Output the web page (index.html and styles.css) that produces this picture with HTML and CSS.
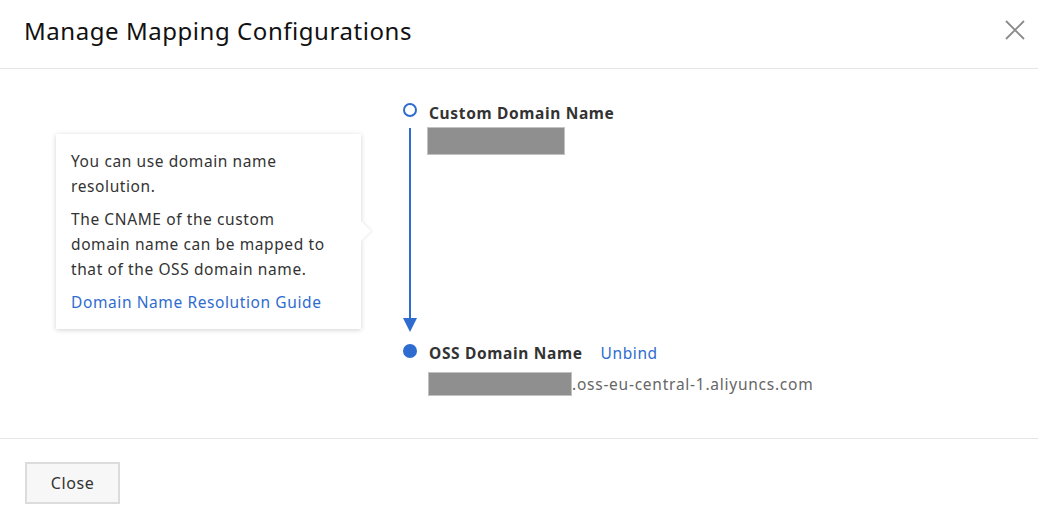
FILE: index.html
```html
<!DOCTYPE html>
<html>
<head>
<meta charset="utf-8">
<link rel="stylesheet" href="styles.css">
</head>
<body>
<div class="dialog">
  <div class="header">
    <h1 class="title">Manage Mapping Configurations</h1>
    <button class="close-x" aria-label="Close">
      <svg width="20" height="20" viewBox="0 0 20 20"><path d="M1 1L19 19M19 1L1 19" stroke="#8a8a8a" stroke-width="1.8" fill="none"/></svg>
    </button>
  </div>
  <div class="body">
    <div class="tip-col">
      <div class="tip">
        <p>You can use domain name resolution.</p>
        <p>The CNAME of the custom domain name can be mapped to that of the OSS domain name.</p>
        <a class="link" href="#">Domain Name Resolution Guide</a>
        <span class="tip-arrow"></span>
      </div>
    </div>
    <div class="flow">
      <div class="rail">
        <span class="dot hollow"></span>
        <span class="line"></span>
        <span class="arrow"></span>
        <span class="dot filled"></span>
      </div>
      <div class="nodes">
        <div class="node top">
          <div class="label">Custom Domain Name</div>
          <div class="mask mask1"></div>
        </div>
        <div class="node bottom">
          <div class="label">OSS Domain Name<a class="link unbind" href="#">Unbind</a></div>
          <div class="value"><span class="mask mask2"></span>.oss-eu-central-1.aliyuncs.com</div>
        </div>
      </div>
    </div>
  </div>
  <div class="footer">
    <button class="btn">Close</button>
  </div>
</div>
</body>
</html>
```
FILE: styles.css
```css
* { box-sizing: border-box; }
html, body { margin: 0; padding: 0; background: #fff; }
body { font-family: "Noto Sans", "Liberation Sans", Arial, sans-serif; color: #333; width: 1038px; height: 514px; overflow: hidden; letter-spacing: 0.6px; }
.dialog { width: 1038px; height: 514px; display: flex; flex-direction: column; }
.header { height: 69px; border-bottom: 1px solid #e6e6e6; display: flex; align-items: flex-start; justify-content: space-between; padding: 0 13px 0 24px; }
.title { margin: 0; padding-top: 16px; font-size: 24px; font-weight: 400; color: #111; line-height: 30px; letter-spacing: 0.55px; }
.close-x { border: 0; background: none; padding: 0; margin-top: 20px; width: 20px; height: 20px; cursor: pointer; }
.close-x svg { display: block; }
.body { height: 370px; border-bottom: 1px solid #e6e6e6; display: flex; }
.tip-col { width: 401px; padding: 65px 0 0 56px; }
.tip { position: relative; width: 305px; height: 195px; background: #fff; box-shadow: 0 1px 5px rgba(0,0,0,0.18); padding: 15px 15px 0 15px; font-size: 15.5px; line-height: 25px; color: #333; }
.tip p { margin: 0 0 8px 0; max-width: 264px; }
.tip-arrow { position: absolute; right: -7px; top: 90px; width: 14px; height: 14px; background: #fff; transform: rotate(45deg); box-shadow: 2px -2px 3px -1px rgba(0,0,0,0.08); }
.link { color: #2f6ccf; text-decoration: none; }
.flow { display: flex; padding-top: 34px; }
.rail { width: 18px; position: relative; display: flex; flex-direction: column; align-items: center; }
.dot { width: 14px; height: 14px; border-radius: 50%; flex: none; }
.dot.hollow { border: 2px solid #2f6ccf; background: #fff; }
.dot.filled { background: #2f6ccf; margin-top: 12px; }
.line { width: 2px; height: 190px; background: #2f6ccf; margin-top: 11px; }
.arrow { width: 0; height: 0; border-left: 7px solid transparent; border-right: 7px solid transparent; border-top: 14px solid #2f6ccf; }
.nodes { padding-left: 10px; display: flex; flex-direction: column; margin-top: -2px; }
.node .label { font-weight: 700; font-size: 15.5px; line-height: 24px; color: #333; letter-spacing: 0.65px; }
.mask { background: #8f8f8f; border: 1px solid #c2c2c2; display: block; }
.mask1 { width: 138px; height: 28px; margin-top: 2px; margin-left: -2px; }
.node.bottom { margin-top: 186px; }
.unbind { font-weight: 400; margin-left: 18px; letter-spacing: 0.6px; }
.value { display: flex; align-items: center; font-size: 15.5px; color: #666; margin-top: 7px; margin-left: -1px; letter-spacing: 0.75px; }
.mask2 { width: 144px; height: 24px; display: inline-block; }
.footer { flex: 1; padding: 23px 0 0 25px; }
.btn { width: 95px; height: 42px; background: #f7f7f7; border: 2px solid #dcdcdc; font-family: inherit; font-size: 16px; color: #333; padding: 0; letter-spacing: 0.6px; }
```
